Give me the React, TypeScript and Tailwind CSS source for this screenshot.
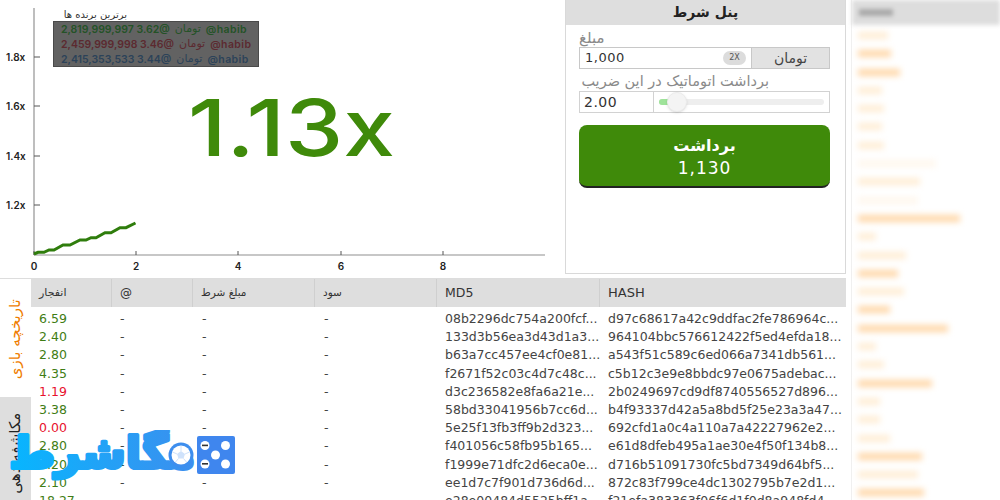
const chartLine =
  "34,254 38,252.3 44,252.3 49,250 54,250 63,245 70,245 80,240 86,240 91,237.7 96,237.7 105,232.7 111,232.7 120,227.7 126,227.7 135.5,223";

const yTicks = [
  { label: "1.8x", y: 57 },
  { label: "1.6x", y: 106 },
  { label: "1.4x", y: 156 },
  { label: "1.2x", y: 205 },
];

const xTicks = [
  { label: "0", x: 34 },
  { label: "2", x: 136 },
  { label: "4", x: 238 },
  { label: "6", x: 341 },
  { label: "8", x: 443 },
];

const winners = [
  { amount: "2,819,999,997", rate: "3.62@", color: "text-[#245227]" },
  { amount: "2,459,999,998", rate: "3.46@", color: "text-[#5c2a30]" },
  { amount: "2,415,353,533", rate: "3.44@", color: "text-[#2c4259]" },
];

const rows = [
  { crash: "6.59", md5: "08b2296dc754a200fcf...", hash: "d97c68617a42c9ddfac2fe786964c..." },
  { crash: "2.40", md5: "133d3b56ea3d43d1a3...", hash: "964104bbc576612422f5ed4efda18..." },
  { crash: "2.80", md5: "b63a7cc457ee4cf0e81...", hash: "a543f51c589c6ed066a7341db561..." },
  { crash: "4.35", md5: "f2671f52c03c4d7c48c...", hash: "c5b12c3e9e8bbdc97e0675adebac..." },
  { crash: "1.19", md5: "d3c236582e8fa6a21e...", hash: "2b0249697cd9df8740556527d896..." },
  { crash: "3.38", md5: "58bd33041956b7cc6d...", hash: "b4f93337d42a5a8bd5f25e23a3a47..." },
  { crash: "0.00", md5: "5e25f13fb3ff9b2d323...", hash: "692cfd1a0c4a110a7a42227962e2..." },
  { crash: "2.80", md5: "f401056c58fb95b165...", hash: "e61d8dfeb495a1ae30e4f50f134b8..." },
  { crash: "2.20", md5: "f1999e71dfc2d6eca0e...", hash: "d716b51091730fc5bd7349d64bf5..." },
  { crash: "2.10", md5: "ee1d7c7f901d736d6d...", hash: "872c83f799ce4dc1302795b7e2d1..." },
  { crash: "18.27", md5: "e28e00484d5525bff1a...", hash: "f21efa383363f06f6d1f0d8a948fd4..." },
];

const sidebarBars = [
  { w: "w-[30px]", tone: "bg-orange-100" },
  { w: "w-[33px]", tone: "bg-orange-200" },
  { w: "w-[42px]", tone: "bg-orange-200" },
  { w: "w-[24px]", tone: "bg-orange-100" },
  { w: "w-[26px]", tone: "bg-orange-100" },
  { w: "w-[24px]", tone: "bg-orange-100" },
  { w: "w-[26px]", tone: "bg-orange-100" },
  { w: "w-[78px]", tone: "bg-orange-50" },
  { w: "w-[62px]", tone: "bg-orange-100" },
  { w: "w-[60px]", tone: "bg-orange-50" },
  { w: "w-[102px]", tone: "bg-orange-200" },
  { w: "w-[18px]", tone: "bg-orange-100" },
  { w: "w-[48px]", tone: "bg-orange-100" },
  { w: "w-[40px]", tone: "bg-orange-200" },
  { w: "w-[46px]", tone: "bg-orange-100" },
  { w: "w-[32px]", tone: "bg-orange-200" },
  { w: "w-[90px]", tone: "bg-orange-200" },
  { w: "w-[18px]", tone: "bg-orange-100" },
  { w: "w-[26px]", tone: "bg-orange-100" },
  { w: "w-[74px]", tone: "bg-orange-200" },
  { w: "w-[22px]", tone: "bg-orange-100" },
  { w: "w-[22px]", tone: "bg-orange-100" },
  { w: "w-[32px]", tone: "bg-orange-100" },
  { w: "w-[64px]", tone: "bg-orange-200" },
  { w: "w-[60px]", tone: "bg-orange-100" },
  { w: "w-[66px]", tone: "bg-orange-200" },
];

const Chart = () => (
  <div className="relative h-[278px] w-[565px] shrink-0">
    <svg width="565" height="278" className="block">
      <line x1="34" y1="8" x2="34" y2="255" stroke="#a8a8a8" strokeWidth="1.5" />
      <line x1="34" y1="255" x2="545" y2="255" stroke="#b5b5b5" strokeWidth="1.5" />
      {yTicks.map((t) => (
        <g key={t.label}>
          <line x1="34" y1={t.y} x2="40" y2={t.y} stroke="#555" />
          <text x="6" y={t.y + 4} fontSize="10" fontWeight="600" fill="#222" fontFamily="Inter, sans-serif">
            {t.label}
          </text>
        </g>
      ))}
      {xTicks.map((t) => (
        <g key={t.label}>
          <line x1={t.x} y1="251" x2={t.x} y2="255" stroke="#555" />
          <text x={t.x} y="270" fontSize="10" fontWeight="600" fill="#222" textAnchor="middle" fontFamily="Inter, sans-serif">
            {t.label}
          </text>
        </g>
      ))}
      <polyline points={chartLine} fill="none" stroke="#2f7d0c" strokeWidth="3" />
    </svg>

    <div className="absolute left-[53px] top-[8px] w-[206px]">
      <div dir="rtl" className="h-[13px] pr-[132px] text-[10px] leading-[13px] whitespace-nowrap text-[#333] font-['DejaVu_Sans',sans-serif]">
        برترین برنده ها
      </div>
      <div className="flex h-[46px] flex-col justify-center border border-[#4a4a4a] bg-[#626262] pl-[7px] pt-[1px]">
        {winners.map((w) => (
          <div key={w.amount} className={`flex h-[15px] items-center gap-[5px] text-[10.5px] font-semibold whitespace-nowrap font-['Inter',sans-serif] ${w.color}`}>
            <span>
              {w.amount} {w.rate}
            </span>
            <span className="font-['DejaVu_Sans',sans-serif] text-[11px] font-normal">تومان</span>
            <span className="tracking-[0.4px]">@habib</span>
          </div>
        ))}
      </div>
    </div>

    <div className="absolute left-[188px] top-[83px] origin-left scale-x-[1.19] text-[78px] leading-[90px] font-medium text-[#3f8a0a] font-['Inter',sans-serif]">
      1.13x
    </div>
  </div>
);

const BetPanel = () => (
  <div className="h-[274px] w-[281px] shrink-0 border-x border-b border-[#d9d9d9] bg-white font-['DejaVu_Sans',sans-serif]">
    <div dir="rtl" className="flex h-[25px] items-center justify-center bg-[#dedede] text-[14px] font-bold text-[#222]">
      پنل شرط
    </div>
    <div className="px-[13px]">
      <div className="mt-[5px] h-[17px] text-[15px] leading-[17px] text-[#8a8a8a]">مبلغ</div>
      <div className="flex h-[22px] w-[251px] border border-[#c8c8c8]">
        <div className="flex flex-1 items-center justify-between px-[5px]">
          <span className="text-[13px] tracking-[0.5px] text-[#333]">1,000</span>
          <span className="flex h-[14px] w-[23px] items-center justify-center rounded-full bg-[#dcdcdc] text-[8px] text-[#555]">2X</span>
        </div>
        <div className="flex w-[78px] items-center justify-center border-l border-[#c8c8c8] bg-[#e2e2e2] text-[14px] text-[#444]">
          تومان
        </div>
      </div>
      <div dir="rtl" className="mt-[4px] h-[17px] w-[190px] text-[14.5px] leading-[17px] whitespace-nowrap text-[#8a8a8a]">
        برداشت اتوماتیک در این ضریب
      </div>
      <div className="mt-[1px] flex h-[22px] w-[251px] border border-[#d2d2d2]">
        <div className="flex w-[74px] items-center border-r border-[#d2d2d2] pl-[4px] text-[14px] tracking-[0.5px] text-[#333]">
          2.00
        </div>
        <div className="relative flex flex-1 items-center px-[5px]">
          <div className="h-[6px] w-full rounded-full bg-[#eeeeee]" />
          <div className="absolute left-[5px] h-[6px] w-[16px] rounded-l-full bg-[#9fe39a]" />
          <div className="absolute left-[13px] size-[20px] rounded-full border border-[#ececec] bg-[#f4f4f4] shadow-sm" />
        </div>
      </div>
      <button className="mt-[12px] flex h-[63px] w-[251px] flex-col items-center justify-center rounded-[8px] border-b-2 border-[#222] bg-[#3f8a0a] text-white">
        <span className="text-[16px] leading-[24px] font-bold">برداشت</span>
        <span className="text-[17px] leading-[20px] tracking-[1px]">1,130</span>
      </button>
    </div>
  </div>
);

const Sidebar = () => (
  <div className="ml-[5px] h-[500px] flex-1 border-l border-[#f0f0f0] bg-white">
    <div className="flex h-[25px] items-center bg-[#dddddd] pl-[7px] blur-[2px]">
      <div className="h-[7px] w-[34px] bg-[#aaaaaa]" />
    </div>
    <div className="flex flex-col gap-[11.3px] pl-[6px] pt-[7px] blur-[3px]">
      {sidebarBars.map((b, i) => (
        <div key={i} className={`h-[7px] ${b.w} ${b.tone}`} />
      ))}
    </div>
  </div>
);

const HistoryTable = () => (
  <div className="flex-1 overflow-hidden text-[12.5px] font-['DejaVu_Sans',sans-serif]">
    <div className="grid h-[28px] grid-cols-[81px_81px_122px_122px_163px_1fr] items-stretch bg-[#dedede] text-[10.5px] text-[#333]">
      <div dir="rtl" className="flex items-center justify-end border-r border-[#cfcfcf] pl-[8px] text-[11px]">انفجار</div>
      <div className="flex items-center border-r border-[#cfcfcf] pl-[8px] text-[12px]">@</div>
      <div dir="rtl" className="flex items-center justify-end border-r border-[#cfcfcf] pl-[8px]">مبلغ شرط</div>
      <div dir="rtl" className="flex items-center justify-end border-r border-[#cfcfcf] pl-[8px]">سود</div>
      <div className="flex items-center border-r border-[#cfcfcf] pl-[8px] text-[12.5px]">MD5</div>
      <div className="flex items-center pl-[8px] text-[13px]">HASH</div>
    </div>
    <div className="pt-[3px]">
      {rows.map((r) => (
        <div key={r.md5} className="grid h-[18.2px] grid-cols-[81px_81px_122px_122px_163px_1fr] items-center whitespace-nowrap text-[#444]">
          <div className={`pl-[8px] ${r.crash === "1.19" || r.crash === "0.00" ? "text-[#e8112d]" : "text-[#3f7d14]"}`}>
            {r.crash}
          </div>
          <div className="pl-[8px]">-</div>
          <div className="pl-[9px]">-</div>
          <div className="pl-[9px]">-</div>
          <div className="pl-[8px]">{r.md5}</div>
          <div className="pl-[8px]">{r.hash}</div>
        </div>
      ))}
    </div>
  </div>
);

const SideTabs = () => (
  <div className="flex w-[31px] shrink-0 flex-col font-['DejaVu_Sans',sans-serif]">
    <div className="flex h-[118px] items-center justify-center bg-white pt-[2px]">
      <span dir="rtl" className="rotate-[-90deg] whitespace-nowrap text-[15px] text-[#ef7d00]">
        تاریخچه بازی
      </span>
    </div>
    <div className="flex h-[104px] items-center justify-center bg-[#dedede] pt-[8px]">
      <span dir="rtl" className="rotate-[-90deg] whitespace-nowrap text-[15px] text-[#222]">
        مکاشفه دهی
      </span>
    </div>
  </div>
);

const Logo = () => (
  <svg width="232" height="66" viewBox="0 0 232 66" className="absolute left-[5px] top-[430px]">
    <defs>
      <linearGradient id="logoText" gradientUnits="userSpaceOnUse" x1="0" y1="0" x2="190" y2="0">
        <stop offset="0" stopColor="#05b7ff" />
        <stop offset="1" stopColor="#3d8eee" />
      </linearGradient>
    </defs>
    <text
      x="190"
      y="38"
      direction="rtl"
      fontSize="44"
      fontWeight="700"
      fontFamily="'DejaVu Sans', sans-serif"
      fill="url(#logoText)"
      stroke="url(#logoText)"
      strokeWidth="4"
      strokeLinejoin="round"
    >
      مگاشرط
    </text>
    <circle cx="176" cy="25" r="12.5" fill="#3d8eee" />
    <circle cx="176" cy="25" r="9.5" fill="#fff" />
    <polygon points="176,21 180,24 178.5,28.5 173.5,28.5 172,24" fill="#cfe2fb" />
    <g stroke="#cfe2fb" strokeWidth="1" fill="none">
      <path d="M176 21V16M180 24l4.5-2M178.5 28.5l3 3.5M173.5 28.5l-3 3.5M172 24l-4.5-2" />
    </g>
    <g transform="translate(192 6)">
      <rect width="38" height="38" rx="2" fill="#3f86ee" />
      <circle cx="8" cy="9.5" r="4.5" fill="#fff" />
      <circle cx="28.5" cy="9.5" r="4.5" fill="#fff" />
      <circle cx="18.5" cy="19" r="4.5" fill="#fff" />
      <circle cx="8" cy="28" r="4.5" fill="#fff" />
      <circle cx="28.5" cy="28" r="4.5" fill="#fff" />
      <rect x="5" y="8.6" width="6" height="1.6" fill="#333" />
      <rect x="5" y="27" width="6" height="1.6" fill="#333" />
    </g>
  </svg>
);

export default function App() {
  return (
    <div className="relative flex h-[500px] w-[1000px] overflow-hidden bg-white">
      <div className="flex w-[846px] shrink-0 flex-col">
        <div className="flex">
          <Chart />
          <BetPanel />
        </div>
        <div className="flex border-t border-[#dddddd]">
          <SideTabs />
          <HistoryTable />
        </div>
      </div>
      <Sidebar />
      <Logo />
    </div>
  );
}
